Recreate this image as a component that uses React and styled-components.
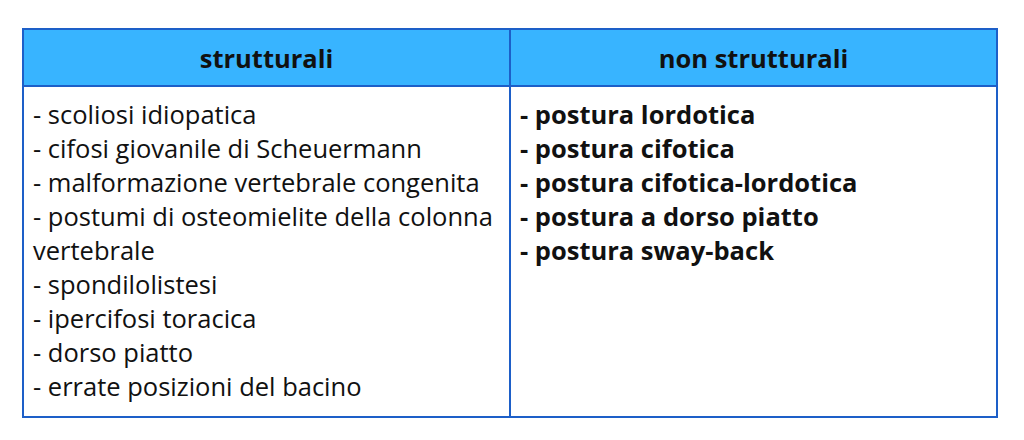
import styled, { createGlobalStyle } from 'styled-components';

const GlobalStyle = createGlobalStyle`
  body {
    margin: 0;
    background: #ffffff;
    font-family: "Open Sans", "Noto Sans", sans-serif;
  }
`;

const Page = styled.div`
  width: 1024px;
  height: 440px;
  padding: 28px 0 0 22px;
  box-sizing: border-box;
`;

const Table = styled.table`
  width: 976px;
  border-collapse: collapse;
  table-layout: fixed;
  border: 2px solid #1d5fc8;
`;

const HeadCell = styled.th`
  background: #38b4ff;
  border: 2px solid #1d5fc8;
  height: 55px;
  padding: 0;
  font-size: 25.5px;
  font-weight: 700;
  color: #111111;
  text-align: center;
  vertical-align: middle;
`;

const BodyCell = styled.td`
  border: 2px solid #1d5fc8;
  padding: 10px 4px 13px 9px;
  vertical-align: top;
  font-size: 25.5px;
  line-height: 34px;
  color: #111111;
  font-weight: ${(p) => (p.$bold ? 700 : 400)};
`;

const Item = styled.div``;

const structural = [
  '- scoliosi idiopatica',
  '- cifosi giovanile di Scheuermann',
  '- malformazione vertebrale congenita',
  '- postumi di osteomielite della colonna vertebrale',
  '- spondilolistesi',
  '- ipercifosi toracica',
  '- dorso piatto',
  '- errate posizioni del bacino',
];

const nonStructural = [
  '- postura lordotica',
  '- postura cifotica',
  '- postura cifotica-lordotica',
  '- postura a dorso piatto',
  '- postura sway-back',
];

const App = () => {
  return (
    <>
      <GlobalStyle />
      <Page>
        <Table>
          <thead>
            <tr>
              <HeadCell>strutturali</HeadCell>
              <HeadCell>non strutturali</HeadCell>
            </tr>
          </thead>
          <tbody>
            <tr>
              <BodyCell>
                {structural.map((t) => (
                  <Item key={t}>{t}</Item>
                ))}
              </BodyCell>
              <BodyCell $bold>
                {nonStructural.map((t) => (
                  <Item key={t}>{t}</Item>
                ))}
              </BodyCell>
            </tr>
          </tbody>
        </Table>
      </Page>
    </>
  );
};

export default App;
